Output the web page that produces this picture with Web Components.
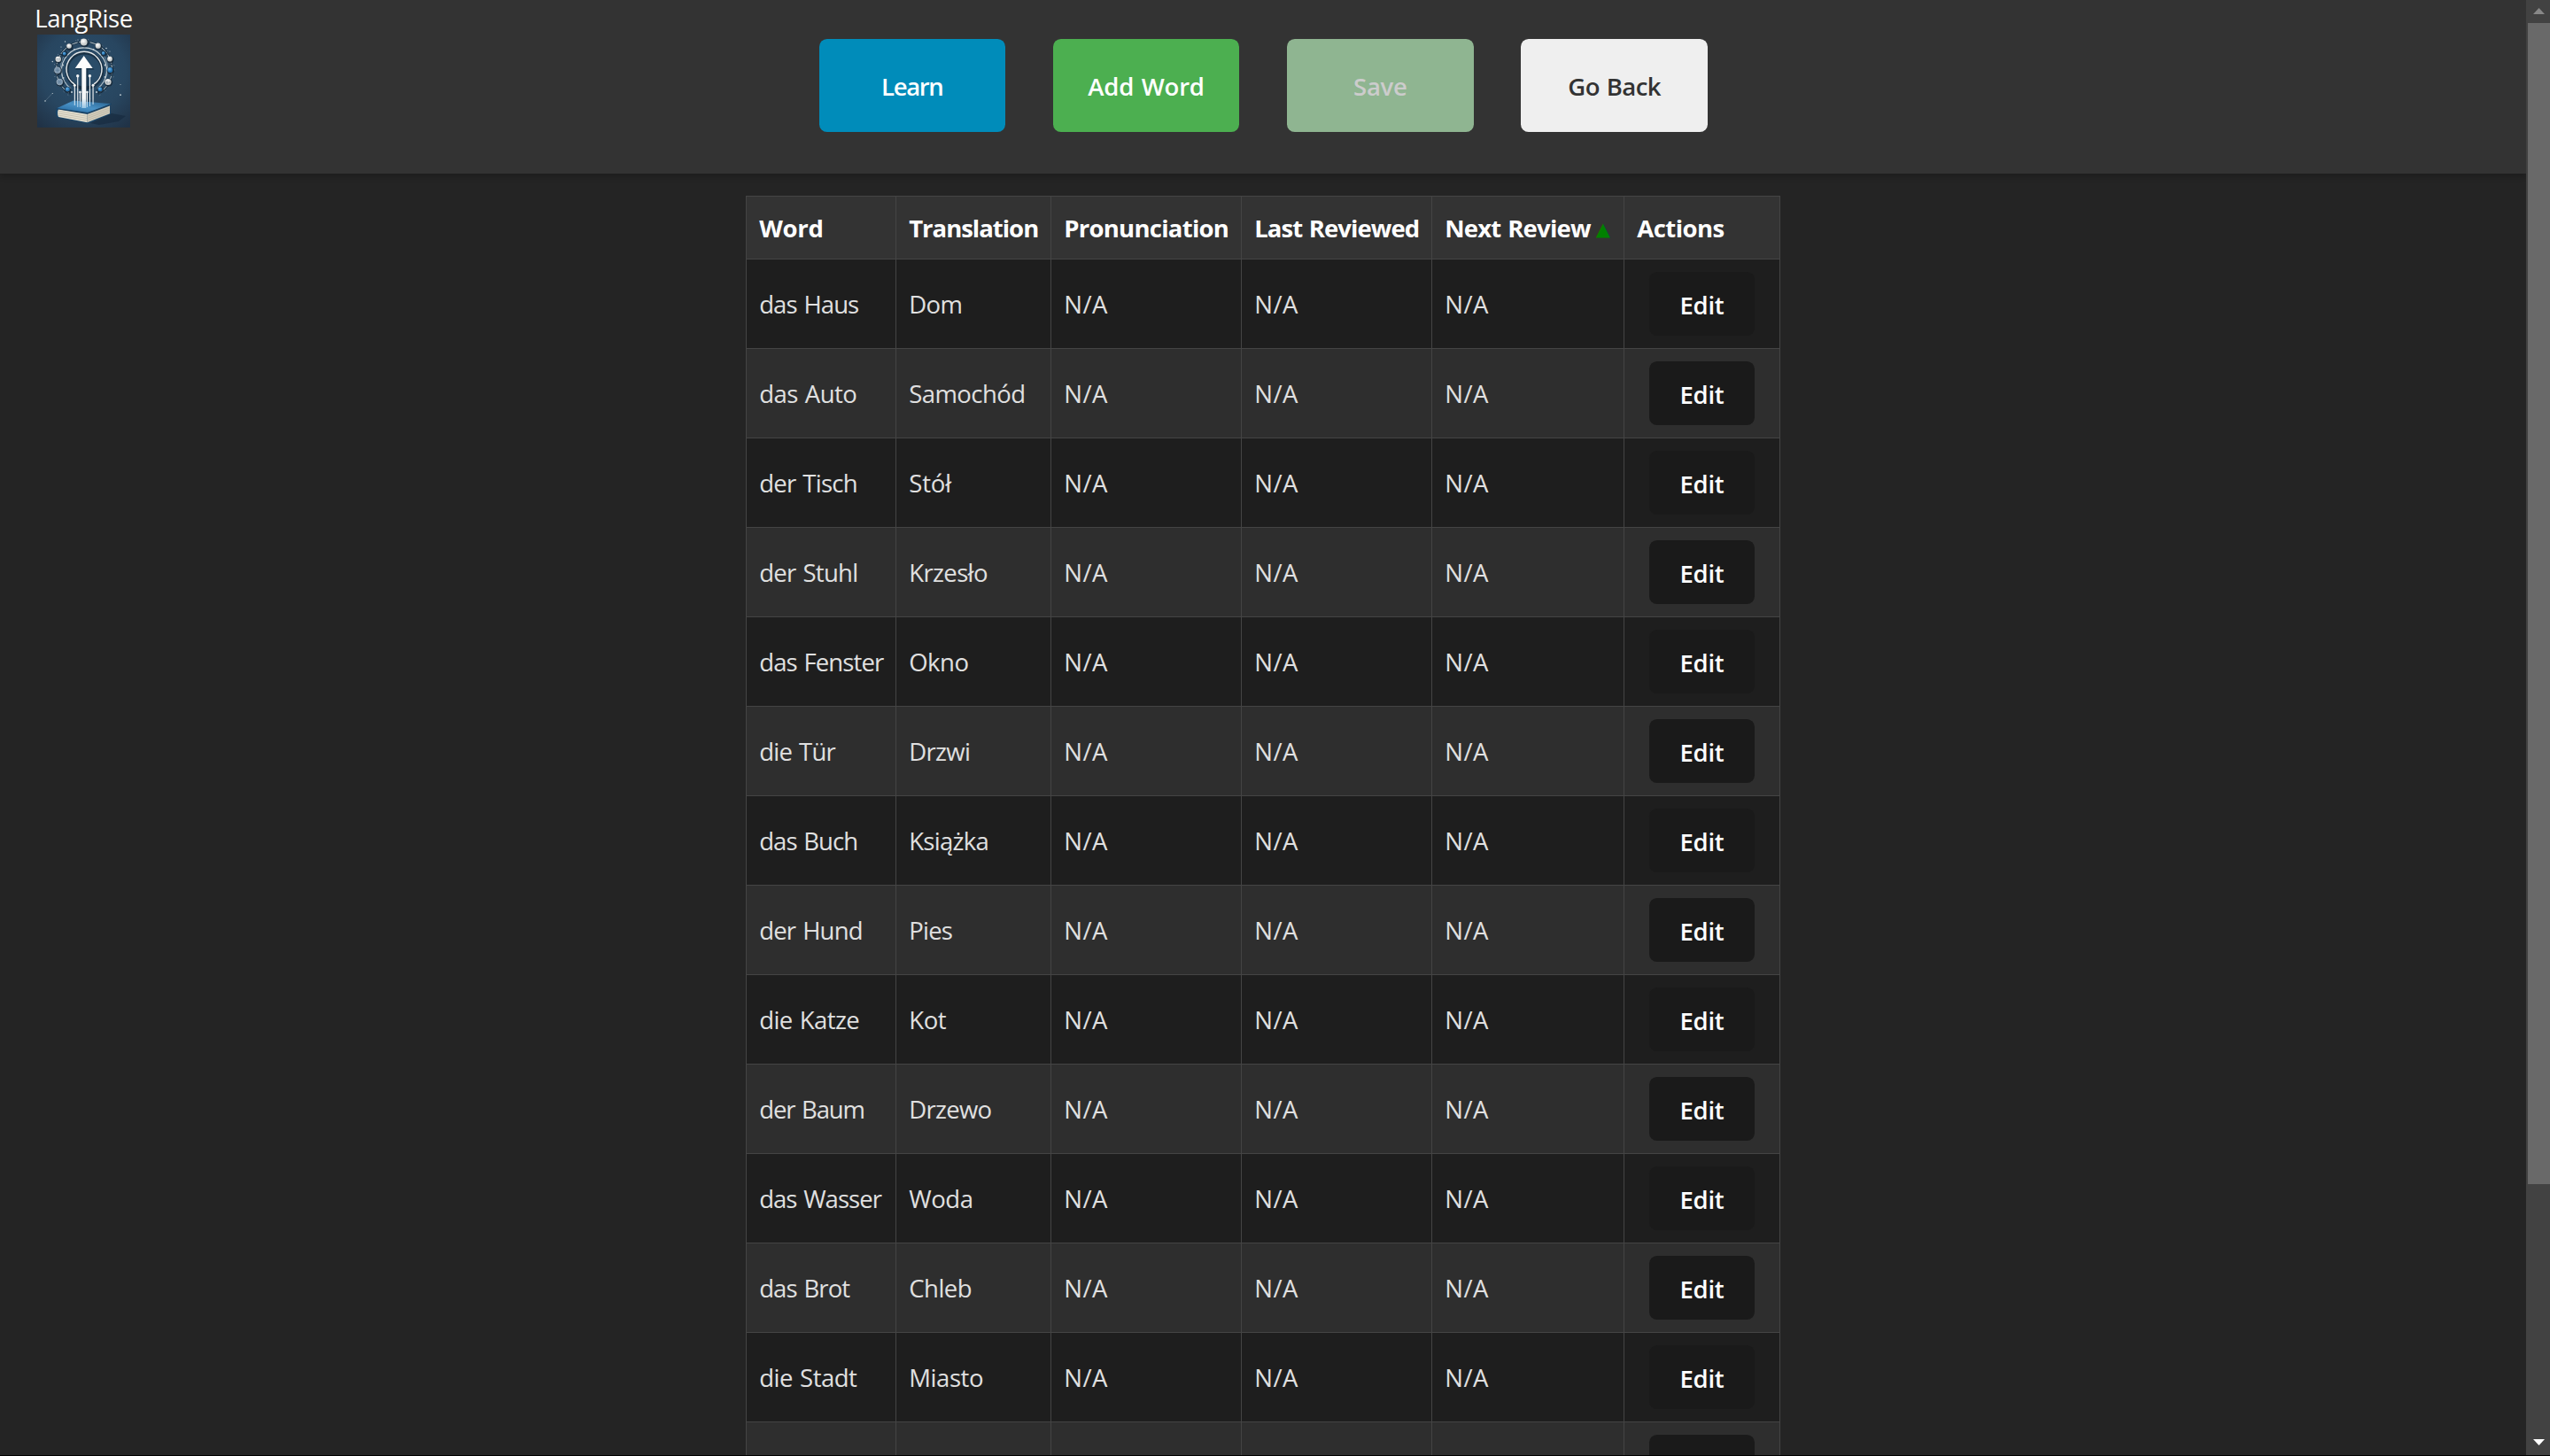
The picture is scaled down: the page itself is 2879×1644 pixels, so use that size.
<!DOCTYPE html>
<html lang="en">
<head>
<meta charset="utf-8">
<title>LangRise</title>
<style>
html,body{margin:0;height:100%;overflow:hidden;background:#000}
body{font-family:"Open Sans","Noto Sans",sans-serif;font-size:27.5px;word-spacing:1.5px;color:#fff}
</style>
</head>
<body>
<lang-app></lang-app>
<script>
const define=(name,html,setup)=>customElements.define(name,class extends HTMLElement{
  connectedCallback(){
    if(this.shadowRoot)return;
    this.attachShadow({mode:'open'}).innerHTML=html;
    if(setup)setup(this,this.shadowRoot);
  }
});

/* A label whose tracking is adjusted so that it takes exactly `w` pixels. */
define('fit-label',`<style>:host{display:inline-block;white-space:nowrap}span{display:inline-block}</style><span><slot></slot></span>`,(el,root)=>{
  const w=+el.getAttribute('w');
  const n=[...el.textContent].length;
  if(!w||!n)return;
  const natural=root.querySelector('span').getBoundingClientRect().width;
  el.style.letterSpacing=((w-natural)/n).toFixed(3)+'px';
});

define('app-logo',`<style>:host{display:block;width:105px;height:105px}svg{display:block}</style>
<svg width="105" height="105" viewBox="0 0 105 105">
<defs>
<radialGradient id="bg" cx=".5" cy=".4" r=".75"><stop offset="0" stop-color="#2b4f6c"/><stop offset=".6" stop-color="#284660"/><stop offset="1" stop-color="#203246"/></radialGradient>
<linearGradient id="cover" x1="0" y1="1" x2="1" y2="0"><stop offset="0" stop-color="#1d5f96"/><stop offset=".5" stop-color="#4a92c6"/><stop offset="1" stop-color="#245d8a"/></linearGradient>
<linearGradient id="shaft" gradientUnits="userSpaceOnUse" x1="0" y1="24" x2="0" y2="84"><stop offset="0" stop-color="#fff"/><stop offset=".8" stop-color="#f3f5f6"/><stop offset="1" stop-color="#8fc0e2"/></linearGradient>
<radialGradient id="pearl" cx=".4" cy=".35"><stop offset="0" stop-color="#fff"/><stop offset="1" stop-color="#c8cccc"/></radialGradient>
<radialGradient id="blue" cx=".4" cy=".35"><stop offset="0" stop-color="#69b4ea"/><stop offset="1" stop-color="#2471ae"/></radialGradient>
</defs>
<rect width="105" height="105" fill="url(#bg)"/>
<path d="M60 100 84 89 100 92 92 98 70 102Z" fill="#14273a" opacity=".55"/>
<g fill="none">
<circle cx="53.500" cy="40.500" r="20" stroke="#152a3d" stroke-width="3.800" opacity=".8"/>
<path d="M38 67A31.500 31.500 0 1 1 68.500 67" stroke="#142636" stroke-width="2.400" opacity=".6"/>
<path d="M36 66A31.500 31.500 0 1 1 70 66" stroke="#b9c7cf" stroke-width="1" stroke-dasharray="11 1.500"/>
<path d="M38 61A25.500 25.500 0 1 1 68 61" stroke="#cdd7dc" stroke-width="1.100"/>
<path d="M36 59A27.500 27.500 0 0 1 31 23M70 59A27.500 27.500 0 0 0 75 23" stroke="#8ea5b4" stroke-width=".7"/>
<path d="M42 56A20 20 0 1 1 64 56" stroke="#e3e7e9" stroke-width="1.500"/>
<circle cx="53" cy="39.500" r="34" stroke="#b7c4cc" stroke-width=".7" stroke-dasharray="1 7 1 11 1 5" opacity=".7"/>
<path d="M9 75 17 66.500" stroke="#7c92a2" stroke-width=".4"/>
</g>
<g fill="#142636" opacity=".8"><circle cx="53.500" cy="9.500" r="5"/><circle cx="36.600" cy="14" r="3.900"/><circle cx="69.200" cy="13.500" r="4.100"/><circle cx="82.500" cy="28.300" r="3.900"/><circle cx="24" cy="28.500" r="4.100"/><circle cx="23.500" cy="41" r="4.800"/><circle cx="82.700" cy="40.700" r="4.200"/><circle cx="26" cy="54.300" r="4.600"/><circle cx="80.500" cy="54.300" r="4.600"/><circle cx="34.600" cy="62.300" r="3.600"/><circle cx="71.300" cy="62.300" r="3.600"/><circle cx="31" cy="22" r="3.200"/><circle cx="75" cy="21.500" r="3.200"/></g>
<g fill="url(#pearl)"><circle cx="52.700" cy="8.500" r="3.900"/><circle cx="36" cy="13" r="2.800"/><circle cx="68.700" cy="12.700" r="3.100"/><circle cx="82" cy="27.500" r="2.900"/><circle cx="23.700" cy="27.700" r="3.200"/><circle cx="80" cy="53.500" r="3.600"/></g>
<g fill="#8099b0" stroke="#a9bac8" stroke-width=".6"><circle cx="22.900" cy="40.300" r="3.500"/><circle cx="25.300" cy="53.500" r="3.400"/></g>
<path d="M21 40.300H25M22.900 38V42.600M23.300 52.200 27 54.800M27 52 23.600 55" stroke="#557590" stroke-width=".6"/>
<path d="M21.800 27.700H25.600M78 54H82M79 52.200V55.600" stroke="#5d7180" stroke-width=".8" stroke-dasharray="1 .5"/>
<g fill="url(#blue)"><circle cx="82.300" cy="40" r="3"/><circle cx="34.300" cy="61.800" r="2.500"/><circle cx="71" cy="61.800" r="2.500"/><circle cx="30.700" cy="21.500" r="2"/><circle cx="74.700" cy="21" r="2"/></g>
<g fill="#c3cfd6"><circle cx="29" cy="34.500" r="1"/><circle cx="76.600" cy="34.500" r="1"/><circle cx="29.500" cy="49" r="1"/><circle cx="76.600" cy="48" r="1"/><circle cx="39" cy="65" r="1"/><circle cx="67" cy="65" r="1"/><circle cx="42" cy="17" r=".9"/><circle cx="63.500" cy="17" r=".9"/><circle cx="17.300" cy="30.500" r=".7"/><circle cx="94" cy="68.200" r=".9"/><circle cx="94" cy="56.500" r=".5"/><circle cx="9" cy="75" r=".8"/><circle cx="17.300" cy="66.500" r=".6"/><circle cx="27" cy="14" r=".6"/><circle cx="31.500" cy="8" r=".7"/><circle cx="78" cy="15.500" r=".8"/><circle cx="46" cy="6" r=".6"/><circle cx="82" cy="19" r=".5"/></g>
<path d="M22.500 82.500Q19 88 22.500 93.500L57 100.500 83 89.500 82 80 57 89Z" fill="#1a4669"/>
<path d="M24 84.500 56.500 90V99.300L24 93Q22 88 24 84.500Z" fill="#e4dfcf"/>
<path d="M56.500 90 82 80.500V89.300L56.500 99.300Z" fill="#d3cdbc"/>
<path d="M24 86.500 56.500 92.300 82 82.800M23.500 88.800 56.500 94.600 82 85M24 91 56.500 97 82 87.200" fill="none" stroke="#a8a495" stroke-width=".5"/>
<path d="M21.500 83.500 41 74.500 84 78.300 57 88.500Z" fill="url(#cover)"/>
<path d="M21.500 83.500 57 88.500 84 78.300" fill="none" stroke="#133a5c" stroke-width=".8"/>
<path d="M53.500 25.500 64.500 39.700H57.500V76H49.500V39.700H43Z" fill="#13283a" opacity=".6"/>
<g fill="url(#shaft)"><path d="M41.800 58h1.100V80h-1.100zM45.200 47h1.100V82h-1.100zM47.900 65h1.100V82h-1.100zM55.900 65h1.100V82h-1.100zM58.900 47h1.100V81h-1.100zM62.500 58h1.100V79h-1.100z"/></g>
<g fill="#f4f5f5"><circle cx="42.300" cy="57.300" r="1.500"/><circle cx="45.700" cy="46.700" r="1.700"/><circle cx="48.400" cy="65" r="1.300"/><circle cx="56.400" cy="65" r="1.300"/><circle cx="59.400" cy="46.700" r="1.700"/><circle cx="63" cy="57.300" r="1.500"/></g>
<path d="M52.700 24 62.700 38H55.300V83H50.300V38H42.800Z" fill="url(#shaft)"/>
</svg>`);

define('app-brand',`<style>:host{display:flex;flex-direction:column;align-items:center;width:111px;padding:2px 0 0 39px}
.name{height:37px;line-height:37px}</style><div class="name"><fit-label w="110.500">LangRise</fit-label></div><app-logo></app-logo>`);

define('app-button',`<style>:host{display:block;width:210.400px;height:105px;font-weight:600}
button{all:unset;box-sizing:border-box;display:flex;align-items:center;justify-content:center;width:100%;height:100%;padding-top:2px;border-radius:8.750px;background:var(--bg,#1a1a1a);color:var(--fg,#fff)}
:host([small]){width:119px;height:72px}</style><button><slot></slot></button>`);

define('app-header',`<style>:host{display:grid;grid-template-columns:1fr auto 1fr;box-sizing:border-box;height:196px;background:#333;box-shadow:0 3.500px 7px rgba(0,0,0,.2);flex:none}
nav{display:flex;gap:53.900px;padding:44px 0 0 .4px}
.learn{--bg:#008cba}.add{--bg:#4caf50}.save{--bg:#8fb591;--fg:#ccc}.back{--bg:#efefef;--fg:#333}</style>
<app-brand></app-brand>
<nav>
<app-button class="learn"><fit-label w="69.500">Learn</fit-label></app-button>
<app-button class="add"><fit-label w="131.500">Add Word</fit-label></app-button>
<app-button class="save"><fit-label w="60.500">Save</fit-label></app-button>
<app-button class="back"><fit-label w="104.500">Go Back</fit-label></app-button>
</nav>`);

const GRID='display:grid;grid-template-columns:169px 175px 215px 215px 217px 177px;box-sizing:border-box;';
const CELL='box-sizing:border-box;display:flex;align-items:center;padding-left:14.200px;border-left:1px solid #444;';

define('word-row',`<style>:host{${GRID}height:101px;border-bottom:1px solid #444;border-right:1px solid #444;background:#1e1e1e;color:#e0e0e0}
:host([alt]){background:#2e2e2e}
.c{${CELL}}.c:last-child{padding-left:28px;color:#fff}</style>
<div class="c"><slot name="word"></slot></div><div class="c"><slot name="translation"></slot></div>
<div class="c"><fit-label w="49.900">N/A</fit-label></div><div class="c"><fit-label w="49.900">N/A</fit-label></div><div class="c"><fit-label w="49.900">N/A</fit-label></div>
<div class="c"><app-button small><fit-label w="50">Edit</fit-label></app-button></div>`,(el,root)=>{
  if(el.hasAttribute('blank'))root.querySelectorAll('fit-label').forEach(n=>n.remove());
});

define('word-head',`<style>:host{${GRID}height:72px;border:1px solid #444;border-left:0;background:#333;font-weight:700}
.c{${CELL}}.up{font:21px "DejaVu Sans",sans-serif;color:#008000;margin:3px 0 0 6px}</style>
<div class="c"><fit-label w="72.500">Word</fit-label></div>
<div class="c"><fit-label w="146">Translation</fit-label></div>
<div class="c"><fit-label w="186">Pronunciation</fit-label></div>
<div class="c"><fit-label w="186">Last Reviewed</fit-label></div>
<div class="c"><fit-label w="164.500">Next Review</fit-label><span class="up">▲</span></div>
<div class="c"><fit-label w="98.500">Actions</fit-label></div>`);

const WORDS=[['das Haus',112.1,'Dom',60.2],['das Auto',110.1,'Samochód',131.3],['der Tisch',110.6,'Stół',47.9],['der Stuhl',111.3,'Krzesło',88.7],['das Fenster',140.2,'Okno',67.3],['die Tür',85.8,'Drzwi',69],['das Buch',110.9,'Książka',90],['der Hund',116.6,'Pies',49],['die Katze',112.9,'Kot',42.1],['der Baum',118.8,'Drzewo',93.3],['das Wasser',137.8,'Woda',72.3],['das Brot',102,'Chleb',71],['die Stadt',110.2,'Miasto',83.9]];

define('word-table',`<style>:host{display:block;width:1168px;margin:25px auto 0}</style><word-head></word-head>`+
WORDS.map(([a,aw,b,bw],i)=>`<word-row ${i%2?'alt':''}><fit-label slot="word" w="${aw}">${a}</fit-label><fit-label slot="translation" w="${bw}">${b}</fit-label></word-row>`).join('')+
`<word-row alt blank></word-row>`);

define('scroll-bar',`<style>:host{display:flex;flex-direction:column;box-sizing:border-box;width:27px;height:100%;padding-left:2px;background:#424242}
svg{display:block;flex:none}.thumb{height:1311px;background:#696969}.gap{flex:1}</style>
<svg width="25" height="26"><path d="M6 16 12.500 9 19 16Z" fill="#888"/></svg><div class="thumb"></div><div class="gap"></div>
<svg width="25" height="18"><path d="M6 0H19L12.500 7Z" fill="#fff"/></svg>`);

define('lang-app',`<style>:host{display:grid;grid-template-columns:2852px 27px;height:1643px;overflow:hidden;background:#242424}
main{height:1643px;overflow:hidden}</style><main><app-header></app-header><word-table></word-table></main><scroll-bar></scroll-bar>`);
</script>
</body>
</html>
